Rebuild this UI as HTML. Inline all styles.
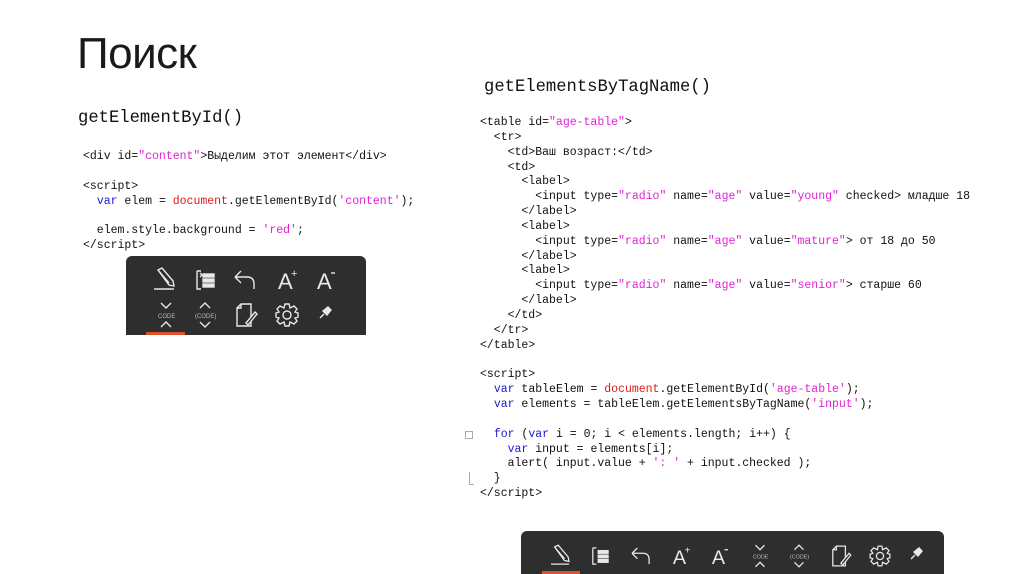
<!DOCTYPE html>
<html><head><meta charset="utf-8">
<style>
html,body{margin:0;padding:0;background:#fff;}
body{width:1024px;height:574px;position:relative;overflow:hidden;font-family:"Liberation Sans",sans-serif;}
.t{position:absolute;left:77px;top:29px;font-size:44px;color:#1a1a1a;letter-spacing:-0.5px;}
.h{position:absolute;font-family:"Liberation Mono",monospace;font-size:17.2px;color:#111;}
pre{position:absolute;margin:0;font-family:"Liberation Mono","DejaVu Sans Mono",monospace;font-size:11.5px;line-height:14.85px;color:#111;}
.k{color:#1a1acc}.s{color:#e020d8}.r{color:#e01a1a}
.tb{position:absolute;background:#2e2e2e;border-radius:6px 6px 0 0;}
svg{position:absolute;left:0;top:0;}
</style></head><body>
<div class="t">Поиск</div>
<div class="h" style="left:78px;top:109px">getElementById()</div>
<div class="h" style="left:484px;top:78px">getElementsByTagName()</div>

<pre style="left:83px;top:150px">&lt;div id=<span class="s">"content"</span>&gt;Выделим этот элемент&lt;/div&gt;

&lt;script&gt;
  <span class="k">var</span> elem = <span class="r">document</span>.getElementById(<span class="s">'content'</span>);

  elem.style.background = <span class="s">'red'</span>;
&lt;/script&gt;</pre>

<pre style="left:480px;top:116px">&lt;table id=<span class="s">"age-table"</span>&gt;
  &lt;tr&gt;
    &lt;td&gt;Ваш возраст:&lt;/td&gt;
    &lt;td&gt;
      &lt;label&gt;
        &lt;input type=<span class="s">"radio"</span> name=<span class="s">"age"</span> value=<span class="s">"young"</span> checked&gt; младше 18
      &lt;/label&gt;
      &lt;label&gt;
        &lt;input type=<span class="s">"radio"</span> name=<span class="s">"age"</span> value=<span class="s">"mature"</span>&gt; от 18 до 50
      &lt;/label&gt;
      &lt;label&gt;
        &lt;input type=<span class="s">"radio"</span> name=<span class="s">"age"</span> value=<span class="s">"senior"</span>&gt; старше 60
      &lt;/label&gt;
    &lt;/td&gt;
  &lt;/tr&gt;
&lt;/table&gt;

&lt;script&gt;
  <span class="k">var</span> tableElem = <span class="r">document</span>.getElementById(<span class="s">'age-table'</span>);
  <span class="k">var</span> elements = tableElem.getElementsByTagName(<span class="s">'input'</span>);

  <span class="k">for</span> (<span class="k">var</span> i = 0; i &lt; elements.length; i++) {
    <span class="k">var</span> input = elements[i];
    alert( input.value + <span class="s">': '</span> + input.checked );
  }
&lt;/script&gt;</pre>
<div style="position:absolute;left:465px;top:431px;width:6px;height:6px;border:1px solid #aaa"></div>
<div style="position:absolute;left:469px;top:472px;width:4px;height:12px;border-left:1px solid #aaa;border-bottom:1px solid #aaa"></div>

<div class="tb" style="left:126px;top:256px;width:240px;height:79px"></div>
<div class="tb" style="left:521px;top:531px;width:423px;height:43px"></div>
<div style="position:absolute;left:146px;top:332px;width:39px;height:3px;background:#e0502a"></div>
<div style="position:absolute;left:542px;top:571px;width:38px;height:3px;background:#e0502a"></div>

<svg width="1024" height="574" fill="none" stroke="#e8e8e8" stroke-width="1.4" font-family="Liberation Sans,sans-serif">
<g transform="translate(164,280)">
 <path d="M-6 -10 L-2 -12 L9 1 L10 6 L5 5 Z M-6 -10 L5 3"/><path d="M-10 9 H10"/></g>
<g transform="translate(205,280)">
 <path d="M-8 -9 V9 H-4 M-8 -9 H-4 M-3 -5 L-5 -7 M-3 -5 L-5 -3"/><rect x="-2" y="-6" width="11" height="3" fill="#e8e8e8"/><rect x="-2" y="-1" width="11" height="3" fill="#e8e8e8"/><rect x="-2" y="4" width="11" height="3" fill="#e8e8e8"/></g>
<g transform="translate(245,280)">
 <path d="M-10 -3 L-4 -9 M-10 -3 L-4 3 M-10 -3 H2 Q9 -3 9 4 V9"/></g>
<g transform="translate(287,280)"><text x="-9" y="9" font-size="22" fill="#e8e8e8" stroke="none">A</text><text x="4" y="-3" font-size="11" fill="#e8e8e8" stroke="none">+</text></g>
<g transform="translate(326,280)"><text x="-9" y="9" font-size="22" fill="#e8e8e8" stroke="none">A</text><path d="M5 -7 H9"/></g>
<g transform="translate(166,315)"><path d="M-5 -12 L0 -7 L5 -12 M-5 12 L0 7 L5 12"/><text x="-8" y="3" font-size="6" fill="#bbb" stroke="none">CODE</text></g>
<g transform="translate(205,315)"><path d="M-5 -7 L0 -12 L5 -7 M-5 7 L0 12 L5 7"/><text x="-10" y="3" font-size="6" fill="#bbb" stroke="none">(CODE)</text></g>
<g transform="translate(245,315)"><path d="M-4 -11 H6 V11 H-8 V-7 Z M-8 -7 H-4 V-11"/><path d="M1 8 L10 -3 L12 -1 L3 10 Z" fill="#2e2e2e"/></g>
<g transform="translate(287,315)"><circle r="4"/><path d="M-2 -11 H2 L3 -7 L7 -9 L10 -6 L8 -3 L11 -2 V2 L8 3 L10 6 L7 9 L3 7 L2 11 H-2 L-3 7 L-7 9 L-10 6 L-8 3 L-11 2 V-2 L-8 -3 L-10 -6 L-7 -9 L-3 -7 Z"/></g>
<g transform="translate(325,313)"><path d="M-5 5 L-1 1" /><path d="M-2 -2 L3 -6 L6 -3 L2 2 Z" fill="#e8e8e8"/></g>
<g transform="translate(560,556) scale(0.9)">
 <path d="M-6 -10 L-2 -12 L9 1 L10 6 L5 5 Z M-6 -10 L5 3"/><path d="M-10 9 H10"/></g>
<g transform="translate(600,556) scale(0.9)">
 <path d="M-8 -9 V9 H-4 M-8 -9 H-4"/><rect x="-2" y="-6" width="11" height="3" fill="#e8e8e8"/><rect x="-2" y="-1" width="11" height="3" fill="#e8e8e8"/><rect x="-2" y="4" width="11" height="3" fill="#e8e8e8"/></g>
<g transform="translate(641,556) scale(0.9)"><path d="M-10 -3 L-4 -9 M-10 -3 L-4 3 M-10 -3 H2 Q9 -3 9 4 V9"/></g>
<g transform="translate(681,556) scale(0.9)"><text x="-9" y="9" font-size="22" fill="#e8e8e8" stroke="none">A</text><text x="4" y="-3" font-size="11" fill="#e8e8e8" stroke="none">+</text></g>
<g transform="translate(720,556) scale(0.9)"><text x="-9" y="9" font-size="22" fill="#e8e8e8" stroke="none">A</text><path d="M5 -7 H9"/></g>
<g transform="translate(760,556) scale(0.9)"><path d="M-5 -12 L0 -7 L5 -12 M-5 12 L0 7 L5 12"/><text x="-8" y="3" font-size="6" fill="#bbb" stroke="none">CODE</text></g>
<g transform="translate(799,556) scale(0.9)"><path d="M-5 -7 L0 -12 L5 -7 M-5 7 L0 12 L5 7"/><text x="-10" y="3" font-size="6" fill="#bbb" stroke="none">(CODE)</text></g>
<g transform="translate(840,556) scale(0.9)"><path d="M-4 -11 H6 V11 H-8 V-7 Z M-8 -7 H-4 V-11"/><path d="M1 8 L10 -3 L12 -1 L3 10 Z" fill="#2e2e2e"/></g>
<g transform="translate(880,556) scale(0.9)"><circle r="4"/><path d="M-2 -11 H2 L3 -7 L7 -9 L10 -6 L8 -3 L11 -2 V2 L8 3 L10 6 L7 9 L3 7 L2 11 H-2 L-3 7 L-7 9 L-10 6 L-8 3 L-11 2 V-2 L-8 -3 L-10 -6 L-7 -9 L-3 -7 Z"/></g>
<g transform="translate(916,554)"><path d="M-5 5 L-1 1"/><path d="M-2 -2 L3 -6 L6 -3 L2 2 Z" fill="#e8e8e8"/></g>
</svg>
</body></html>
